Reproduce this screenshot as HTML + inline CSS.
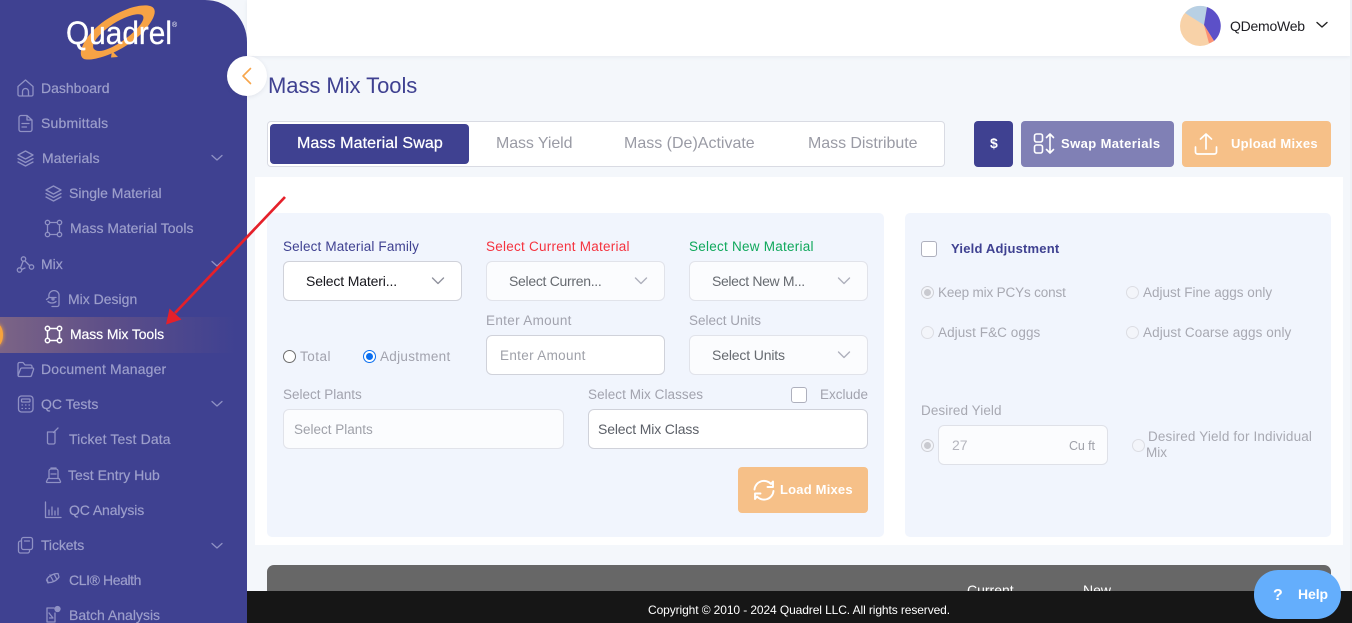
<!DOCTYPE html>
<html><head><meta charset="utf-8"><title>Mass Mix Tools</title>
<style>
*{box-sizing:border-box}
html,body{margin:0;padding:0;width:1352px;height:623px;overflow:hidden;background:#f4f7fb;font-family:"Liberation Sans",sans-serif}
.a{position:absolute}
.t{position:absolute;white-space:nowrap;line-height:16px;height:16px}
#side{position:absolute;left:0;top:0;width:247px;height:623px;background:#3f4191;border-top-right-radius:42px;overflow:hidden}
#side .t{font-size:14px;color:#9c9ecb;-webkit-text-stroke:.2px currentColor}
#side svg{position:absolute;fill:none;stroke:#8f91c4;stroke-width:1.3;stroke-linecap:round;stroke-linejoin:round}
.l{font-size:13.5px;color:#a2a3ae}
.box{position:absolute;height:40px;border:1px solid #e1e3ea;border-radius:6px;background:#fbfcfe}
.box.w{background:#fff;border-color:#d0d2da}
.sel{font-size:14px;color:#666a70}
.ph{font-size:14px;color:#9fa1a9}
.chev{position:absolute;fill:none;stroke:#aeb0bc;stroke-width:1.4;stroke-linecap:round;stroke-linejoin:round}
.rd{position:absolute;width:13px;height:13px;border-radius:50%;border:1px solid #dcdde3;background:#f3f5fa}
.rd.on:after{content:"";position:absolute;left:2px;top:2px;width:7px;height:7px;border-radius:50%;background:#c9cad0}
.rd.on{border-color:#cfd0d6}
.ck{position:absolute;width:16px;height:16px;border:1px solid #aeb0bd;border-radius:3px;background:#fff}
.btn{position:absolute;height:46px;border-radius:4px}
.bt{position:absolute;white-space:nowrap;color:#fff;font-weight:700;font-size:13px;line-height:16px}
.tab{position:absolute;top:136px;font-size:16px;line-height:16px;color:#9a9ba5;white-space:nowrap}
</style></head>
<body>
<div class="a" style="left:247px;top:0;width:1103px;height:56px;background:#fff;box-shadow:0 1px 4px rgba(60,60,90,.07)"></div>
<div class="a" style="left:1350px;top:0;width:2px;height:623px;background:#eef1f6"></div>

<svg class="a" style="left:1180px;top:5px" width="42" height="42" viewBox="1180 5 42 42">
<circle cx="1200" cy="26" r="20" fill="#f8d2a8"/>
<path d="M1204 25L1185 13A20 20 0 0 1 1207 7Z" fill="#b8d0e4"/>
<path d="M1204 25L1207 7A20 20 0 0 1 1214 41Z" fill="#5c50c8"/>
<path d="M1204 25L1214 41A20 20 0 0 1 1209 43.3Z" fill="#fb9274"/>
</svg>
<div class="t" style="left:1230px;top:18px;font-size:14px;color:#1d1d22;letter-spacing:-.25px">QDemoWeb</div>
<svg class="a" style="left:1315px;top:20px" width="14" height="10" fill="none" stroke="#222" stroke-width="1.4" stroke-linecap="round" stroke-linejoin="round"><path d="M2 2.5L7 7L12 2.5"/></svg>

<div class="t" style="left:268px;top:75px;font-size:22px;line-height:22px;height:24px;color:#3f4191;letter-spacing:-.05px">Mass Mix Tools</div>

<div class="a" style="left:267px;top:121px;width:678px;height:46px;background:#fff;border:1px solid #d9dbe3;border-radius:4px"></div>
<div class="a" style="left:270px;top:124px;width:199px;height:40px;background:#3f4191;border-radius:4px"></div>
<div class="tab" style="left:297px;color:#fff;letter-spacing:.1px;-webkit-text-stroke:.25px #fff">Mass Material Swap</div>
<div class="tab" style="left:496px;letter-spacing:-.1px">Mass Yield</div>
<div class="tab" style="left:624px">Mass (De)Activate</div>
<div class="tab" style="left:808px;letter-spacing:-.05px">Mass Distribute</div>

<div class="btn" style="left:974px;top:121px;width:39px;background:#3f4191"></div>
<div class="bt" style="left:990px;top:135px;font-size:14px">$</div>
<div class="btn" style="left:1021px;top:121px;width:153px;background:#8080b5"></div>
<svg class="a" style="left:1033px;top:132px" width="24" height="24" fill="none" stroke="#fff" stroke-width="1.6" stroke-linecap="round" stroke-linejoin="round"><rect x="1.5" y="2" width="8" height="8" rx="2"/><rect x="1.5" y="13" width="8" height="8" rx="2"/><path d="M17 2V21M13.5 5.5L17 2L20.5 5.5M13.5 17.5L17 21L20.5 17.5"/></svg>
<div class="bt" style="left:1061px;top:136px;letter-spacing:.4px">Swap Materials</div>
<div class="btn" style="left:1182px;top:121px;width:149px;background:#f6c088"></div>
<svg class="a" style="left:1193px;top:131px" width="26" height="26" fill="none" stroke="#fff" stroke-width="1.7" stroke-linecap="round" stroke-linejoin="round"><path d="M13 18V3M7.5 8L13 3L18.5 8M2.5 16V21A2 2 0 0 0 4.5 23H21.500A2 2 0 0 0 23.500 21V16"/></svg>
<div class="bt" style="left:1231px;top:136px;letter-spacing:.25px">Upload Mixes</div>

<div class="a" style="left:255px;top:177px;width:1088px;height:368px;background:#fff"></div>
<div class="a" style="left:267px;top:213px;width:617px;height:324px;background:#f1f5fd;border-radius:5px"></div>
<div class="a" style="left:905px;top:213px;width:426px;height:324px;background:#f1f5fd;border-radius:5px"></div>

<div class="t l" style="left:283px;top:239px;color:#3f4191;letter-spacing:.15px">Select Material Family</div>
<div class="t l" style="left:486px;top:239px;color:#f5333f;letter-spacing:.25px">Select Current Material</div>
<div class="t l" style="left:689px;top:239px;color:#10a85c;letter-spacing:.25px">Select New Material</div>

<div class="box w" style="left:283px;top:261px;width:179px"></div>
<div class="t sel" style="left:306px;top:273px;color:#16161c;letter-spacing:-.15px">Select Materi...</div>
<svg class="chev" style="left:431px;top:276px;stroke:#8f919c" width="14" height="10"><path d="M1.500 2L7 7.500L12.500 2"/></svg>
<div class="box" style="left:486px;top:261px;width:179px"></div>
<div class="t sel" style="left:509px;top:273px;letter-spacing:-.3px">Select Curren...</div>
<svg class="chev" style="left:634px;top:276px" width="14" height="10"><path d="M1.500 2L7 7.500L12.500 2"/></svg>
<div class="box" style="left:689px;top:261px;width:179px"></div>
<div class="t sel" style="left:712px;top:273px;letter-spacing:-.35px">Select New M...</div>
<svg class="chev" style="left:837px;top:276px" width="14" height="10"><path d="M1.500 2L7 7.500L12.500 2"/></svg>

<div class="t l" style="left:486px;top:313px;letter-spacing:.33px">Enter Amount</div>
<div class="t l" style="left:689px;top:313px">Select Units</div>
<div class="box w" style="left:486px;top:335px;width:179px"></div>
<div class="t ph" style="left:500px;top:348px;font-size:13.5px;letter-spacing:.33px">Enter Amount</div>
<div class="box" style="left:689px;top:335px;width:179px"></div>
<div class="t sel" style="left:712px;top:347px;letter-spacing:-.15px">Select Units</div>
<svg class="chev" style="left:837px;top:350px" width="14" height="10"><path d="M1.500 2L7 7.500L12.500 2"/></svg>

<div class="a" style="left:283px;top:350px;width:13px;height:13px;border-radius:50%;border:1px solid #6d6d6d;background:#fff"></div>
<div class="t l" style="left:300px;top:349px;letter-spacing:.5px">Total</div>
<div class="a" style="left:363px;top:350px;width:13px;height:13px;border-radius:50%;border:1.500px solid #0b6ff0;background:#fff"></div>
<div class="a" style="left:366px;top:353px;width:7px;height:7px;border-radius:50%;background:#0b6ff0"></div>
<div class="t l" style="left:380px;top:349px;letter-spacing:.3px">Adjustment</div>

<div class="t l" style="left:283px;top:387px">Select Plants</div>
<div class="box" style="left:283px;top:409px;width:281px"></div>
<div class="t ph" style="left:294px;top:422px;font-size:13.500px">Select Plants</div>
<div class="t l" style="left:588px;top:387px;letter-spacing:.06px">Select Mix Classes</div>
<div class="ck" style="left:791px;top:387px"></div>
<div class="t l" style="left:820px;top:387px">Exclude</div>
<div class="box w" style="left:588px;top:409px;width:280px"></div>
<div class="t sel" style="left:598px;top:421px;font-size:14px;color:#5c6068;letter-spacing:-.15px">Select Mix Class</div>

<div class="btn" style="left:738px;top:467px;width:130px;background:#f6c088"></div>
<svg class="a" style="left:752px;top:478px" width="24" height="24" fill="none" stroke="#fff" stroke-width="1.900" stroke-linecap="round" stroke-linejoin="round"><path d="M2.500 11.500A9.500 9.500 0 0 1 19 6L21 3.500V9H15.500M21.500 13A9.500 9.500 0 0 1 5 18.500L3 21V15.500H8.500"/></svg>
<div class="bt" style="left:780px;top:482px;letter-spacing:.2px">Load Mixes</div>

<div class="ck" style="left:921px;top:241px"></div>
<div class="t" style="left:951px;top:241px;font-size:13px;font-weight:700;color:#3f4191;letter-spacing:.2px">Yield Adjustment</div>
<div class="rd on" style="left:921px;top:286px"></div>
<div class="t l" style="left:938px;top:285px;color:#a8a9b2;letter-spacing:-.15px">Keep mix PCYs const</div>
<div class="rd" style="left:1126px;top:286px"></div>
<div class="t l" style="left:1143px;top:285px;color:#a8a9b2">Adjust Fine aggs only</div>
<div class="rd" style="left:921px;top:326px"></div>
<div class="t l" style="left:938px;top:325px;color:#a8a9b2;letter-spacing:.07px">Adjust F&amp;C oggs</div>
<div class="rd" style="left:1126px;top:326px"></div>
<div class="t l" style="left:1143px;top:325px;color:#a8a9b2;letter-spacing:.09px">Adjust Coarse aggs only</div>
<div class="t l" style="left:921px;top:403px;color:#a8a9b2;letter-spacing:.08px">Desired Yield</div>
<div class="rd on" style="left:921px;top:439px"></div>
<div class="box" style="left:938px;top:425px;width:170px;border-color:#dfe1e8"></div>
<div class="t" style="left:952px;top:437px;font-size:14px;color:#b5b6be">27</div>
<div class="t" style="left:1069px;top:438px;font-size:12.500px;color:#9fa1a9;letter-spacing:-.1px">Cu ft</div>
<div class="rd" style="left:1132px;top:439px"></div>
<div class="t l" style="left:1148px;top:429px;color:#a8a9b2;letter-spacing:.15px">Desired Yield for Individual</div>
<div class="t l" style="left:1146px;top:445px;color:#a8a9b2">Mix</div>

<div class="a" style="left:267px;top:565px;width:1064px;height:40px;background:#676767;border-radius:7px 7px 0 0"></div>
<div class="t" style="left:967px;top:582px;font-size:14px;color:#fff">Current</div>
<div class="t" style="left:1083px;top:582px;font-size:14px;color:#fff">New</div>

<div class="a" style="left:247px;top:591px;width:1105px;height:32px;background:#161616"></div>
<div class="t" style="left:648px;top:602px;font-size:12px;color:#fff;letter-spacing:-.1px">Copyright © 2010 - 2024 Quadrel LLC. All rights reserved.</div>
<div class="a" style="left:1254px;top:570px;width:87px;height:49px;background:#64aefc;border-radius:24px"></div>
<div class="t" style="left:1273px;top:588px;font-size:16px;font-weight:700;color:#fff">?</div>
<div class="t" style="left:1298px;top:586px;font-size:14px;font-weight:700;color:#fff;letter-spacing:-.1px">Help</div>

<div id="side">
<div class="a" style="left:0;top:317px;width:235px;height:36px;background:linear-gradient(90deg,#7c6486 0%,#5e4f88 45%,rgba(63,65,145,0) 100%)"></div>
<div class="a" style="left:-9px;top:324px;width:12px;height:22px;border-radius:50%;background:#f8a33c;box-shadow:0 0 4px #f8a33c"></div>

<svg style="left:50px;top:4px;stroke:none" width="140" height="60" viewBox="50 4 140 60">
<path fill-rule="evenodd" fill="#f7a345" d="M84 59C93 62 124 52 143 32C156 18 158 8 150 6C139 3 114 12 98 26C84 38 76 55 84 59ZM94 49C90 44 100 33 113 24C127 15 141 12 143 16C146 21 133 34 121 42C110 49 98 54 94 49Z"/>
<path fill="#f7a345" d="M112 51l6 6-7 .5z"/>
<text x="66" y="44" font-family="Liberation Sans" font-size="32" fill="#fff" stroke="#fff" stroke-width=".3" textLength="106" lengthAdjust="spacingAndGlyphs">Quadrel</text>
<text x="172" y="27" font-family="Liberation Sans" font-size="7" fill="#fff" stroke="none">®</text>
</svg>

<svg style="left:16px;top:78px" width="19" height="20"><path d="M2 8.500L9.500 2L17 8.500V16.500A1.500 1.500 0 0 1 15.500 18H3.500A1.500 1.500 0 0 1 2 16.500ZM6.500 18V13.500A3 3 0 0 1 12.500 13.500V18"/></svg>
<div class="t" style="left:41px;top:80px">Dashboard</div>
<svg style="left:17px;top:114px" width="17" height="19"><path d="M2 3.500A2 2 0 0 1 4 1.500H10L15 6V15.500A2 2 0 0 1 13 17.500H4A2 2 0 0 1 2 15.500ZM10 1.500V6H15M5 9.500H12M5 13H9.500"/></svg>
<div class="t" style="left:41px;top:115px;letter-spacing:.2px">Submittals</div>
<svg style="left:16px;top:149px" width="19" height="19"><path d="M9.500 2L17 6L9.500 10L2 6ZM2 9.500L9.500 13.500L17 9.500M2 13L9.500 17L17 13"/></svg>
<div class="t" style="left:42px;top:150px;letter-spacing:.1px">Materials</div>
<svg style="left:210px;top:153px" width="14" height="10"><path d="M2 2.500L7 7L12 2.500"/></svg>
<svg style="left:44px;top:184px" width="19" height="19"><path d="M9.500 2L17 6L9.500 10L2 6ZM2 9.500L9.500 13.500L17 9.500M2 13L9.500 17L17 13"/></svg>
<div class="t" style="left:69px;top:185px">Single Material</div>
<svg style="left:44px;top:219px" width="19" height="19"><circle cx="3.500" cy="3.500" r="2.200"/><circle cx="15.500" cy="3.500" r="2.200"/><circle cx="3.500" cy="15.500" r="2.200"/><circle cx="15.500" cy="15.500" r="2.200"/><path d="M6 3.500H13M6 15.500H13M3.500 6V13M15.500 6V13"/></svg>
<div class="t" style="left:70px;top:220px">Mass Material Tools</div>
<svg style="left:16px;top:255px" width="19" height="19"><circle cx="7.500" cy="4" r="2.200"/><circle cx="3.500" cy="15" r="2.200"/><circle cx="15.500" cy="12" r="2.200"/><path d="M7 6.500L4.500 13M9 6L13.500 10.500M5.500 14.500L9 13"/></svg>
<div class="t" style="left:41px;top:256px">Mix</div>
<svg style="left:210px;top:259px" width="14" height="10"><path d="M2 2.500L7 7L12 2.500"/></svg>
<svg style="left:45px;top:290px" width="18" height="18"><path d="M4 7A5 5 0 0 1 14 4.500V14.500A2 2 0 0 1 12 16.500H7M1.500 9.500L4 7.500H11M3 11.500C5 13.500 9 13.500 11 11.500"/><circle cx="8" cy="9" r="1"/></svg>
<div class="t" style="left:68px;top:291px">Mix Design</div>
<svg style="left:44px;top:325px;stroke:#fff;stroke-width:1.500" width="19" height="19"><circle cx="3.500" cy="3.500" r="2.200"/><circle cx="15.500" cy="3.500" r="2.200"/><circle cx="3.500" cy="15.500" r="2.200"/><circle cx="15.500" cy="15.500" r="2.200"/><path d="M6 3.500H13M6 15.500H13M3.500 6V13M15.500 6V13"/></svg>
<div class="t" style="left:70px;top:326px;color:#fff;letter-spacing:-.1px">Mass Mix Tools</div>
<svg style="left:16px;top:360px" width="19" height="19"><path d="M2 14.500V4A1.500 1.500 0 0 1 3.500 2.500H7L9 5H14.500A1.500 1.500 0 0 1 16 6.500V8M2 15.500L4.500 9A1.500 1.500 0 0 1 6 8H16.500A1 1 0 0 1 17.500 9.500L15.500 15.500A1.500 1.500 0 0 1 14 16.500H3.500A1.500 1.500 0 0 1 2 15.500Z"/></svg>
<div class="t" style="left:41px;top:361px;letter-spacing:.15px">Document Manager</div>
<svg style="left:17px;top:395px" width="17" height="18"><rect x="1.500" y="1" width="14.500" height="16" rx="3"/><rect x="4.500" y="4" width="8.500" height="3" rx=".7"/><path d="M5 10H5.500M8.500 10H9M12 10H12.500M5 13.500H5.500M8.500 13.500H9M12 13.500H12.500"/></svg>
<div class="t" style="left:41px;top:396px">QC Tests</div>
<svg style="left:210px;top:399px" width="14" height="10"><path d="M2 2.500L7 7L12 2.500"/></svg>
<svg style="left:45px;top:427px" width="16" height="20"><path d="M2.500 5H10V15.500A1.500 1.500 0 0 1 8.500 17H4A1.500 1.500 0 0 1 2.500 15.500ZM8.500 5.500L13 1"/></svg>
<div class="t" style="left:69px;top:431px;letter-spacing:.13px">Ticket Test Data</div>
<svg style="left:45px;top:466px" width="17" height="18"><path d="M4 12V5A2 2 0 0 1 6 3H11A2 2 0 0 1 13 5V12M6 3V2H11V3M1.500 15.500L3 12.500H14L15.500 15.500A.7 .7 0 0 1 15 16.500H2A.7 .7 0 0 1 1.500 15.500ZM6 8H11"/></svg>
<div class="t" style="left:68px;top:467px">Test Entry Hub</div>
<svg style="left:44px;top:501px" width="18" height="18"><path d="M1.500 1V16.500H17M5 14V9M8 14V6M11 14V10M14 14V7"/></svg>
<div class="t" style="left:69px;top:502px;letter-spacing:-.1px">QC Analysis</div>
<svg style="left:17px;top:536px" width="17" height="19"><path d="M4.500 3.500A2 2 0 0 1 6.500 1.500H13.500A2 2 0 0 1 15.500 3.500V11.500A2 2 0 0 1 13.500 13.500H6.500A2 2 0 0 1 4.500 11.500ZM4.500 5H3.500A2 2 0 0 0 1.500 7V15A2 2 0 0 0 3.500 17H10.500A2 2 0 0 0 12.500 15V13.500M7.500 5H12.500"/></svg>
<div class="t" style="left:41px;top:537px;letter-spacing:-.1px">Tickets</div>
<svg style="left:210px;top:541px" width="14" height="10"><path d="M2 2.500L7 7L12 2.500"/></svg>
<svg style="left:45px;top:571px" width="16" height="17"><path d="M2 8C4 5 8 2.500 13 2.500L14 6C12 9.500 7 12 3 11.500ZM3 12L1.500 9M5 4L8.500 10.500M9 3L12 8.500"/></svg>
<div class="t" style="left:69px;top:572px;letter-spacing:-.4px">CLI® Health</div>
<svg style="left:45px;top:605px" width="17" height="18"><path d="M2 3H9M2 3V17H10V8M4 8L8 13M4.500 13H8"/><circle cx="12.500" cy="4" r="2.500" fill="#8f91c4"/></svg>
<div class="t" style="left:69px;top:607px">Batch Analysis</div>
</div>

<div class="a" style="left:227px;top:56px;width:40px;height:40px;border-radius:50%;background:#fff;box-shadow:0 1px 4px rgba(60,60,90,.1)"></div>
<svg class="a" style="left:240px;top:66px" width="14" height="20" fill="none" stroke="#f7a64c" stroke-width="1.600" stroke-linecap="round" stroke-linejoin="round"><path d="M10.500 2.500L3 10L10.500 17.500"/></svg>

<svg class="a" style="left:150px;top:185px" width="150" height="150" viewBox="150 185 150 150">
<path d="M285 197L175 313" stroke="#e5202a" stroke-width="2.700" fill="none"/>
<path d="M166 324.500L169.500 308.500L181.500 319.500Z" fill="#e5202a"/>
</svg>
</body></html>
